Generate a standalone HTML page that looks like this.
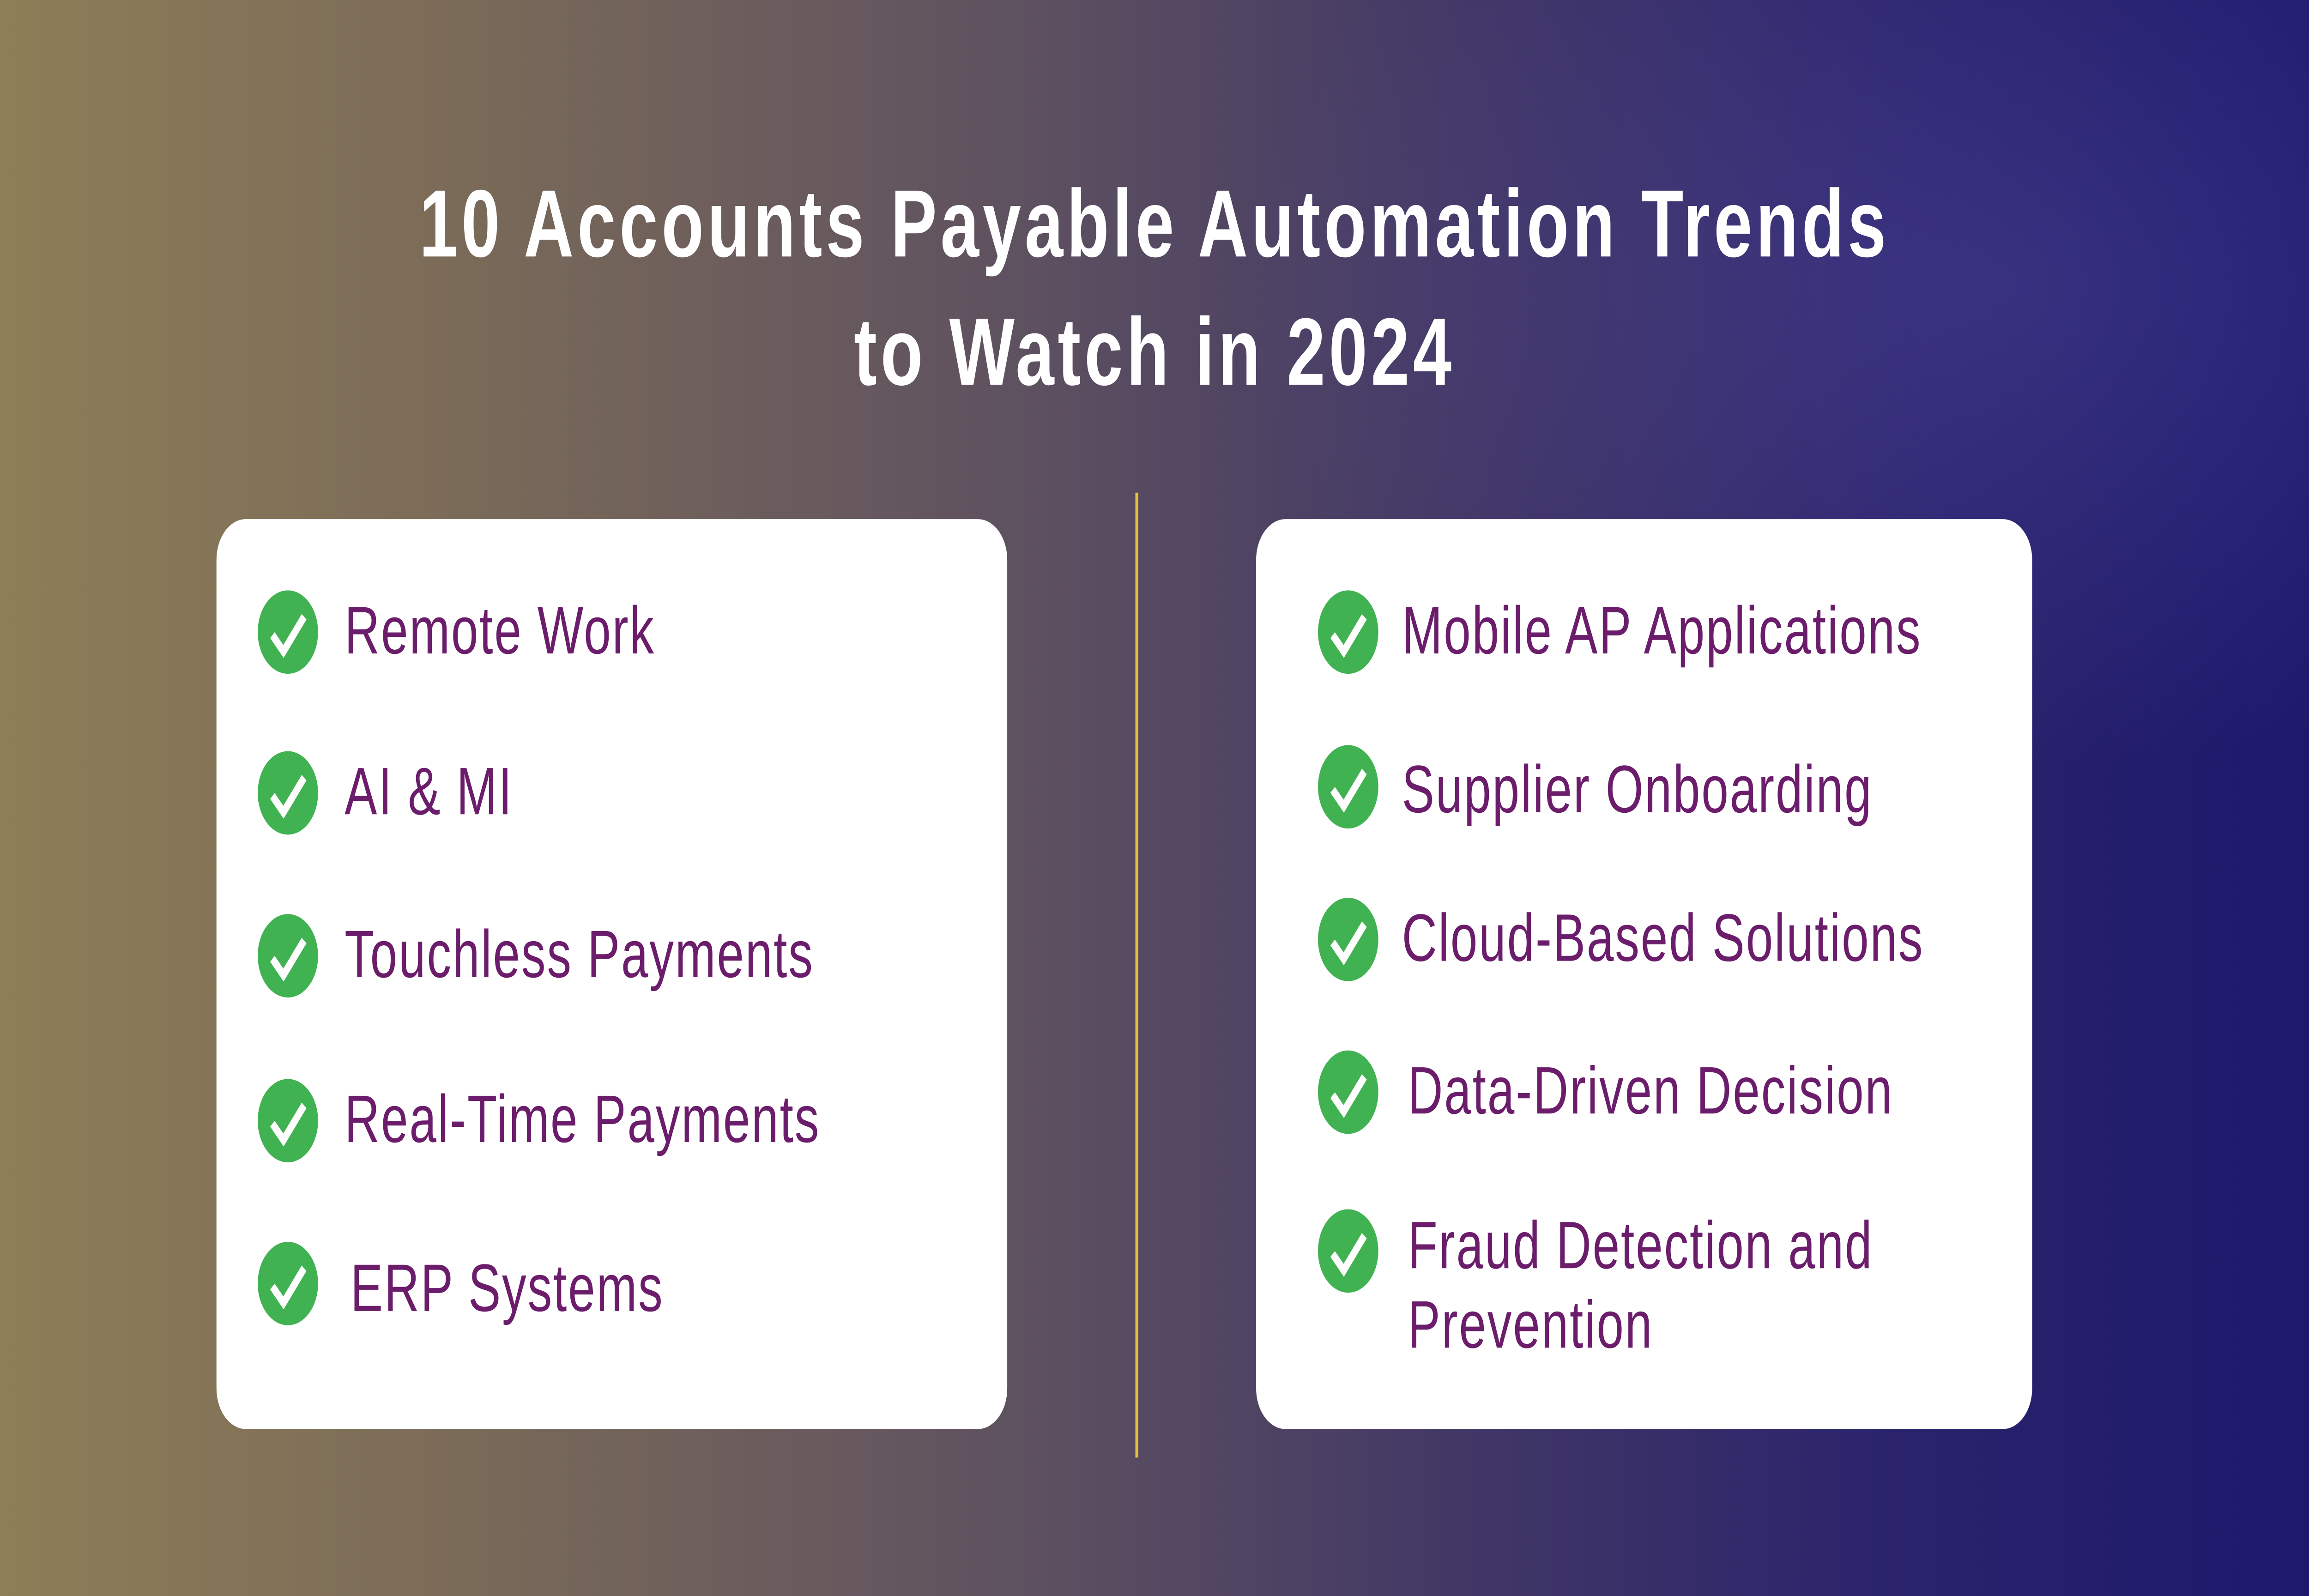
<!DOCTYPE html>
<html><head><meta charset="utf-8"><style>
html,body{margin:0;padding:0;width:100vw;height:100vh;overflow:hidden;background:#5d5060;}
svg.page{display:block;width:100vw;height:100vh;}
text{font-family:"Liberation Sans",sans-serif;}
.t{fill:#fff;font-weight:bold;font-size:47px;letter-spacing:2.45px;}
.i{fill:#6b1d6b;font-size:33px;letter-spacing:0.9px;}
</style></head><body>
<svg class="page" viewBox="0 0 1568 784" preserveAspectRatio="none" xmlns="http://www.w3.org/2000/svg">
<defs>
<linearGradient id="bg" x1="0" y1="0" x2="1" y2="0">
<stop offset="0" stop-color="#8d7e57"/><stop offset="0.2" stop-color="#7a6a58"/><stop offset="0.45" stop-color="#5d5060"/><stop offset="0.65" stop-color="#3f3566"/><stop offset="0.82" stop-color="#2a236c"/><stop offset="1" stop-color="#1d196c"/>
</linearGradient>
<radialGradient id="gl" cx="0.75" cy="0.35" r="0.6">
<stop offset="0" stop-color="#786ec8" stop-opacity="0.22"/><stop offset="1" stop-color="#786ec8" stop-opacity="0"/>
</radialGradient>
<g id="c"><circle cx="20.5" cy="20.5" r="20.5" fill="#41b252"/><path d="M10 22 L17.5 30 L31.5 13" stroke="#fff" stroke-width="4.2" fill="none"/></g>
</defs>
<rect width="1568" height="784" fill="url(#bg)"/>
<rect x="700" y="0" width="868" height="400" fill="url(#gl)"/>
<text class="t" x="784" y="126" text-anchor="middle">10 Accounts Payable Automation Trends</text>
<text class="t" x="784" y="189" text-anchor="middle">to Watch in 2024</text>
<rect x="147" y="255" width="537" height="447" rx="20" fill="#fff"/>
<rect x="853" y="255" width="527" height="447" rx="20" fill="#fff"/>
<rect x="771" y="242" width="2" height="474" fill="#e8c23a"/>

<use href="#c" x="175" y="290"/><text class="i" x="234" y="321">Remote Work</text>
<use href="#c" x="175" y="369"/><text class="i" x="234" y="400">AI &amp; MI</text>
<use href="#c" x="175" y="449"/><text class="i" x="234" y="480">Touchless Payments</text>
<use href="#c" x="175" y="530"/><text class="i" x="234" y="561">Real-Time Payments</text>
<use href="#c" x="175" y="610"/><text class="i" x="238" y="644">ERP Systems</text>

<use href="#c" x="895" y="290"/><text class="i" x="952" y="321">Mobile AP Applications</text>
<use href="#c" x="895" y="366"/><text class="i" x="952" y="399">Supplier Onboarding</text>
<use href="#c" x="895" y="441"/><text class="i" x="952" y="472">Cloud-Based Solutions</text>
<use href="#c" x="895" y="516"/><text class="i" x="956" y="547">Data-Driven Decision</text>
<use href="#c" x="895" y="594"/><text class="i" x="956" y="623">Fraud Detection and</text>
<text class="i" x="956" y="662">Prevention</text>
</svg>
</body></html>
